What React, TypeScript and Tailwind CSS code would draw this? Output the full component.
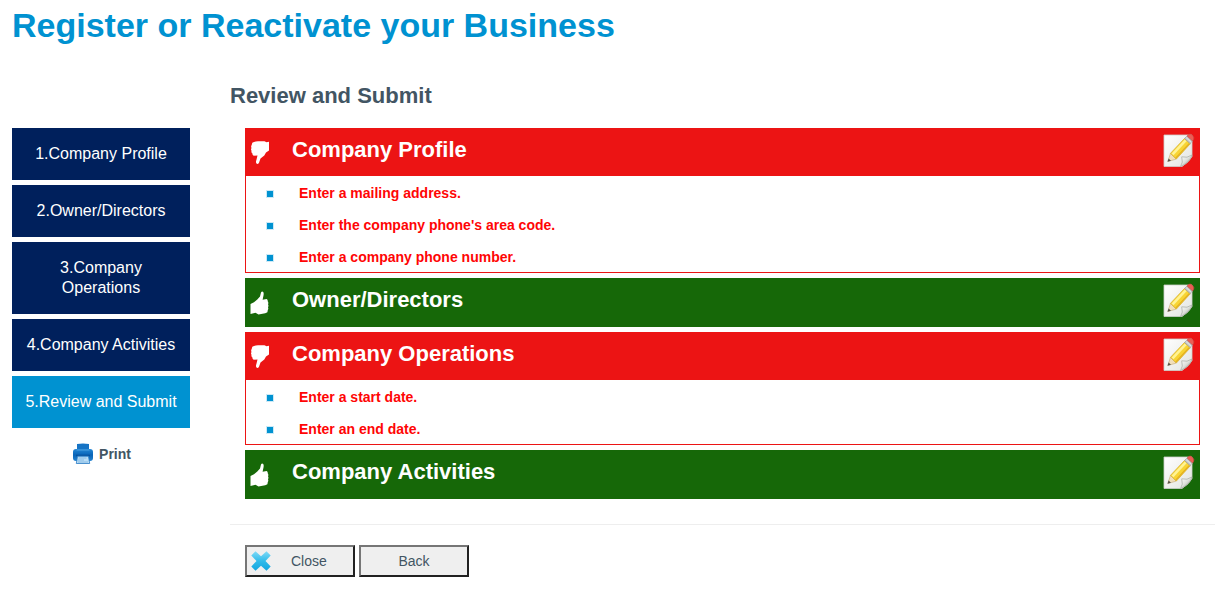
import React from "react";
import clsx from "clsx";

const steps = [
  { label: "1.Company Profile", href: "#profile" },
  { label: "2.Owner/Directors", href: "#directors" },
  { label: "3.Company Operations", href: "#operations" },
  { label: "4.Company Activities", href: "#activities" },
  { label: "5.Review and Submit", href: "#review", active: true },
];

const sections = [
  {
    name: "Company Profile",
    errors: [
      "Enter a mailing address.",
      "Enter the company phone's area code.",
      "Enter a company phone number.",
    ],
  },
  { name: "Owner/Directors", errors: [] },
  {
    name: "Company Operations",
    errors: ["Enter a start date.", "Enter an end date."],
  },
  { name: "Company Activities", errors: [] },
];

const ThumbUp = () => (
  <svg width="20" height="24" viewBox="0 0 20 24" fill="#fff" aria-hidden="true">
    <path d="M.5 13 4 11.300 7.300 8.500 10 5.500 11 1.500Q12 -.2 13.200 1 14 2 13.500 4.500L12.600 8.700 16.600 8Q18 8.500 17.700 10.300 18.800 11.500 18 13.300 18.900 14.700 18 16.200 18.700 17.700 17.800 19L17.400 21.300Q15.500 22.500 12.500 22.700L8.500 23.400 5.500 21.800.5 23Z" />
  </svg>
);

const ThumbDown = () => (
  <svg width="20" height="24" viewBox="0 0 20 24" fill="#fff" aria-hidden="true">
    <path d="M19 .8V9.400L16 11.500 14.300 14.500 10.500 17.500 9 21.700Q7.800 23.700 6.500 22.500 5.500 21.400 6.400 19L7.500 14.500 3.800 14.700Q2.100 14 2.500 12.500.9 11.500 1.600 9.800.5 8.500 1.500 7 .7 5.300 1.700 4L2.300 1.700Q4.500.4 8 .3L14.500.3 16.500 1.300Z" />
  </svg>
);

const EditIcon = () => (
  <svg width="32" height="36" viewBox="0 0 32 36" aria-hidden="true">
    <defs>
      <linearGradient id="sheet" x1="0" y1="0" x2="1" y2="1">
        <stop offset="0" stopColor="#fff" />
        <stop offset="1" stopColor="#e2e4e1" />
      </linearGradient>
      <linearGradient id="fold" x1="0" y1="0" x2="1" y2="1">
        <stop offset="0" stopColor="#fff" />
        <stop offset=".45" stopColor="#e0e3df" />
        <stop offset="1" stopColor="#8f948b" />
      </linearGradient>
    </defs>
    <path d="M1 2h28v21.500Q26 29 19 33.500H1Z" fill="url(#sheet)" stroke="#cdd0cb" strokeWidth=".8" />
    <path d="M17.500 33.500Q20.500 29.500 18.700 23.800 24 25.500 29 22 27.500 29 17.500 33.500Z" fill="url(#fold)" stroke="#a6aaa3" strokeWidth=".7" />
    <path d="m4.800 28.500 2.700-8.200 5.800 5.800Z" fill="#f1dfbb" stroke="#c5a977" strokeWidth=".6" />
    <path d="m4.500 28.800 1.100-3.400 2.400 2.400Z" fill="#55534c" />
    <path d="M7.500 20.300 21.500 5.500l5.800 5.200L13.300 26.100Z" fill="#f8d434" stroke="#d4aa28" strokeWidth=".7" />
    <path d="M8.600 20.400 21.700 6.500l1.900 1.800L10.500 22.300Z" fill="#fff394" />
    <path d="m12.700 25.200 13.500-14.500" stroke="#e3ae20" strokeWidth="1.200" />
    <path d="m21.500 5.500 2.600-2.500 5.500 5-2.300 2.700Z" fill="#c5c8c9" stroke="#93989b" strokeWidth=".6" />
    <path d="m23 4.500 5.500 5" stroke="#eeeeec" strokeWidth=".8" />
    <path d="m24.100 3 1.600-1.600q1.600-1 3.600.8 2.400 2.100 1.400 4L29.600 8Z" fill="#ec5e55" stroke="#c84840" strokeWidth=".6" />
  </svg>
);

const PrintIcon = () => (
  <svg width="24" height="24" viewBox="0 0 24 24" aria-hidden="true">
    <defs>
      <linearGradient id="printer" x1="0" y1="0" x2="0" y2="1">
        <stop offset="0" stopColor="#2386d4" />
        <stop offset=".5" stopColor="#0864b8" />
        <stop offset="1" stopColor="#2483d0" />
      </linearGradient>
    </defs>
    <path d="M6 2Q12 1 18 2V9H6Z" fill="#1674c5" />
    <rect x="2" y="7" width="20" height="12" rx="3" fill="url(#printer)" />
    <path d="M5.500 8h13" stroke="#58aae5" strokeWidth=".8" />
    <path d="M5 13.500h14" stroke="#07519d" strokeWidth="1.500" />
    <path d="M6.500 14.200h11l1.200 7.300H5.300Z" fill="#b9ddf6" stroke="#2679c3" strokeWidth=".8" />
    <path d="M7.500 16h8M7 18h6M7 20h10" stroke="#78b2df" strokeWidth=".8" />
  </svg>
);

const CloseIcon = () => (
  <svg width="20" height="20" viewBox="0 0 20 20" aria-hidden="true">
    <defs>
      <linearGradient id="cross" x1="0" y1="0" x2="0" y2="1">
        <stop offset="0" stopColor="#80daf7" />
        <stop offset=".5" stopColor="#31bbea" />
        <stop offset="1" stopColor="#12a5df" />
      </linearGradient>
    </defs>
    <path d="m.3 4.500 4.200-4.200L10 5.200 15.500.3l4.200 4.200L14.500 10l5.200 5.500-4.200 4.200L10 14.800l-5.500 4.900-4.200-4.200L5.500 10Z" fill="url(#cross)" />
  </svg>
);

const SectionCard = ({ name, errors }: { name: string; errors: string[] }) => {
  const invalid = errors.length > 0;

  return (
    <section className={clsx("border", invalid ? "border-[#ec1414]" : "border-[#166808]")}>
      <div
        className={clsx(
          "flex h-[47px] items-start justify-between pl-1 pr-1",
          invalid ? "bg-[#ec1414]" : "bg-[#166808]"
        )}
      >
        <div className="flex items-start">
          <span className="pt-3">{invalid ? <ThumbDown /> : <ThumbUp />}</span>
          <h3 className="pl-[22px] pt-2 text-[22px] font-bold leading-[26px] text-white">{name}</h3>
        </div>
        <button type="button" aria-label={`Edit ${name}`} className="cursor-pointer pt-1">
          <EditIcon />
        </button>
      </div>
      {invalid && (
        <ul>
          {errors.map((error) => (
            <li key={error} className="flex h-8 items-center pl-[21px] pt-[2px] text-sm font-bold text-[#ff0505]">
              <span className="mr-[26px] mt-[2px] size-[6px] bg-[#0092d1] outline outline-[#0092d1]/20" />
              {error}
            </li>
          ))}
        </ul>
      )}
    </section>
  );
};

const buttonStyle =
  "flex h-8 w-[110px] cursor-pointer items-center border-2 border-t-[#767676] border-l-[#767676] border-r-[#212121] border-b-[#212121] bg-[#efefef] text-sm";

const App = () => {
  return (
    <div className="bg-white pt-1 font-['Liberation_Sans',Arial,sans-serif] text-[#425563]">
      <h1 className="px-3 text-[34px] font-bold leading-[42px] text-[#0092d1]">
        Register or Reactivate your Business
      </h1>
      <div className="flex items-start pl-3 pt-9">
        <aside className="w-[178px] shrink-0 pt-[46px]">
          <nav className="flex flex-col gap-[5px]">
            {steps.map((step) => (
              <a
                key={step.href}
                href={step.href}
                aria-current={step.active ? "step" : undefined}
                className={clsx(
                  "px-3 py-4 text-center text-base leading-5 text-white",
                  step.active ? "bg-[#0092d1]" : "bg-[#00205c]"
                )}
              >
                {step.label}
              </a>
            ))}
          </nav>
          <button
            type="button"
            className="mx-auto mt-[14px] flex cursor-pointer items-center gap-1 text-sm font-bold"
          >
            <PrintIcon />
            Print
          </button>
        </aside>

        <main className="ml-10 mr-[2px] flex-1">
          <h2 className="pt-px text-[22px] font-bold leading-[26px]">Review and Submit</h2>
          <div className="mt-[19px] flex flex-col gap-[5px] px-[15px]">
            {sections.map((section) => (
              <SectionCard key={section.name} {...section} />
            ))}
          </div>
          <hr className="mt-[25px] border-[#eeeeee]" />
          <div className="mt-5 flex gap-1 px-[15px]">
            <button type="button" className={clsx(buttonStyle, "pl-1")}>
              <CloseIcon />
              <span className="pl-5">Close</span>
            </button>
            <button type="button" className={clsx(buttonStyle, "justify-center")}>
              Back
            </button>
          </div>
        </main>
      </div>
    </div>
  );
};

export default App;
